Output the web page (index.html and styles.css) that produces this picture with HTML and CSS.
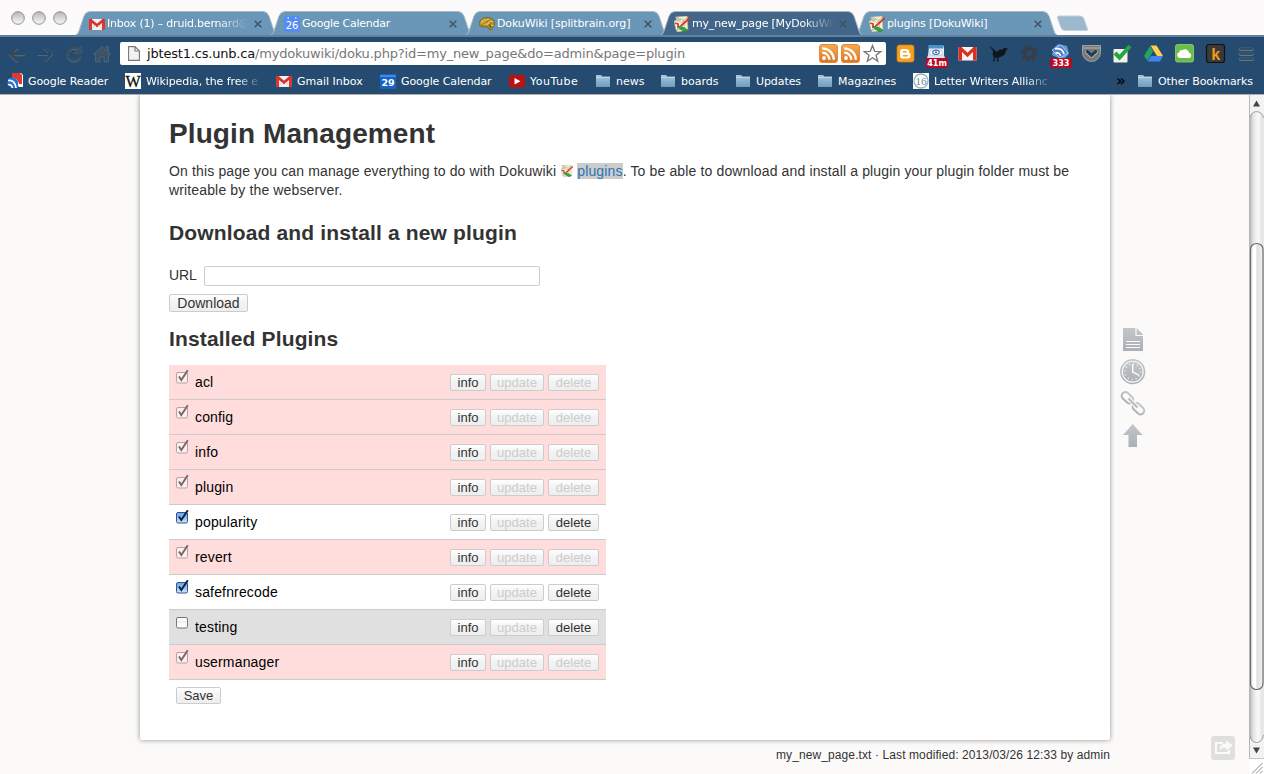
FILE: index.html
```html
<!DOCTYPE html>
<html lang="en">
<head>
<meta charset="utf-8">
<title>my_new_page [MyDokuWiki]</title>
<link rel="stylesheet" href="styles.css">
</head>
<body>
<svg class="defs" width="0" height="0" aria-hidden="true">
  <defs>
    <linearGradient id="gFolder" x1="0" y1="0" x2="0" y2="1"><stop offset="0" stop-color="#a9c6dc"/><stop offset="1" stop-color="#6f9cc0"/></linearGradient>
    <linearGradient id="gRss" x1="0" y1="0" x2="0" y2="1"><stop offset="0" stop-color="#f4ac55"/><stop offset="1" stop-color="#df7420"/></linearGradient>
    <linearGradient id="gLight" x1="0" y1="0" x2="0" y2="1"><stop offset="0" stop-color="#b4b4b4"/><stop offset=".55" stop-color="#dcdcdc"/><stop offset="1" stop-color="#f8f8f8"/></linearGradient>
    <linearGradient id="gTool" x1="0" y1="0" x2="0" y2="1"><stop offset="0" stop-color="#c4c6c8"/><stop offset="1" stop-color="#a9b0b8"/></linearGradient>
    <linearGradient id="gBlue" x1="0" y1="0" x2="0" y2="1"><stop offset="0" stop-color="#6ea5ec"/><stop offset=".5" stop-color="#8fbdf3"/><stop offset="1" stop-color="#cdf0ff"/></linearGradient>
  </defs>
  <symbol id="tab" viewBox="0 0 201 24"><path d="M0 24Q2 23.500 3 20L8 5Q10 .5 14 .5H187Q191 .5 193 5L198 20Q199 23.500 201 24Z" fill="currentColor"/><path d="M0 24Q2 23.500 3 20L8 5Q10 .5 14 .5H187Q191 .5 193 5L198 20Q199 23.500 201 24" fill="none" stroke="#a9b9c6" stroke-width="1"/></symbol>
  <symbol id="gmail" viewBox="0 0 16 16"><path d="M0 3h16v11H0z" fill="#f5eeee"/><path d="M0 3h3v11H0zM13 3h3v11h-3z" fill="#d93a32"/><path d="M1 3.500 8 9.500 15 3.500" fill="none" stroke="#d8302a" stroke-width="2.800"/><path d="M3 13 6.500 9M13 13 9.500 9" stroke="#d9c9c8" stroke-width=".8"/></symbol>
  <symbol id="doku" viewBox="0 0 16 16"><path d="M2 1 13 0 14 14 3 16z" fill="#f3efd9" stroke="#b7b59b" stroke-width=".6"/><path d="M0 5 9 3 11 13 2 14z" fill="#faf8ed" stroke="#a8aa91" stroke-width=".6"/><path d="M2 3h5M3 5h4M3 13h4M1 1h4" stroke="#94a680" stroke-width=".8"/><path d="M15.500 1 7 8.500 5 11 8.300 10 16 3z" fill="#d33a24"/><path d="M14 1 7 7" stroke="#f29b69" stroke-width="1"/><path d="M1 7 4 8 4 12" fill="none" stroke="#d94427" stroke-width="1.800"/><path d="M4 10 9 11 14 14 11 16 6 13z" fill="#32a637" stroke="#207226" stroke-width=".5"/></symbol>
  <symbol id="brain" viewBox="0 0 16 16"><path d="M0 9C0 4 4 1 9 1.500c5 .3 7 3.500 6.500 7L14 11l-2 3-2-.5L8.500 11 2 10.500z" fill="#b08c20" stroke="#65500e" stroke-width=".6"/><path d="M2 8c1-3 3-1 4-3s3-1 4-2M5 9c2-2 3 0 5-2M2 6l4-3M8 9l3-4 3 1M11 12l1.500-3 2 .500" fill="none" stroke="#ecd276" stroke-width="1"/><path d="m10 9 2 1-1 2" fill="none" stroke="#4e3c0c"/></symbol>
  <symbol id="folder" viewBox="0 0 16 16"><path d="M1 2h5l1.500 1.500H15V14H1z" fill="url(#gFolder)"/><path d="M1 4.500h14" stroke="#c6dae8" stroke-width=".8"/></symbol>
  <symbol id="rss" viewBox="0 0 19 19"><rect x=".5" y=".5" width="18" height="18" rx="2.500" fill="url(#gRss)" stroke="#e58a3b"/><circle cx="5" cy="14" r="1.900" fill="#fff"/><path d="M3.300 8.700a7 7 0 0 1 7 7M3.300 4.300A11.500 11.500 0 0 1 14.800 15.800" fill="none" stroke="#fff" stroke-width="2.300"/></symbol>
  <symbol id="chk-off" viewBox="0 0 14 15"><rect x="1.500" y="3.500" width="11" height="10.500" rx="1.500" fill="#fff5f5" fill-opacity=".65" stroke="#b5a3a3"/><path d="M4 7.500 6.300 11 12.800 1.300" fill="none" stroke="#75666a" stroke-width="1.900"/></symbol>
  <symbol id="chk-on" viewBox="0 0 14 15"><rect x="1.500" y="3.500" width="11" height="10.500" rx="1.500" fill="url(#gBlue)" stroke="#32558d"/><path d="M4 7.500 6.300 11 12.800 1.300" fill="none" stroke="#12203a" stroke-width="2"/></symbol>
  <symbol id="chk-none" viewBox="0 0 14 15"><rect x="1.500" y="3.500" width="11" height="10.500" rx="1.500" fill="#fbfbfb" stroke="#777"/><path d="M2.500 8h9" stroke="#eee" stroke-width="2"/></symbol>
</svg>

<header class="browser">
  <div class="tabstrip">
    <div class="lights">
      <svg width="14" height="14" viewBox="0 0 14 14"><circle cx="7" cy="7" r="6.300" fill="url(#gLight)" stroke="#8f8f8f" stroke-width="1"/></svg>
      <svg width="14" height="14" viewBox="0 0 14 14"><circle cx="7" cy="7" r="6.300" fill="url(#gLight)" stroke="#8f8f8f" stroke-width="1"/></svg>
      <svg width="14" height="14" viewBox="0 0 14 14"><circle cx="7" cy="7" r="6.300" fill="url(#gLight)" stroke="#8f8f8f" stroke-width="1"/></svg>
    </div>
    <div class="tab"><svg class="tab-shape"><use href="#tab"/></svg><svg class="fav"><use href="#gmail"/></svg><span class="tab-title fade t1">Inbox (1) – druid.bernard@</span><svg class="close" viewBox="0 0 8 8"><path d="m.7.7 6.600 6.600m0-6.600L.7 7.300"/></svg></div>
    <div class="tab"><svg class="tab-shape"><use href="#tab"/></svg><svg class="fav" viewBox="0 0 16 16"><rect width="16" height="16" rx="1" fill="#548cf3"/><path d="M3.500 2h1.500M11 2h1.500" stroke="#dce8ff" stroke-width="1.500"/><text x="8" y="13" text-anchor="middle" class="cal-num">26</text></svg><span class="tab-title t2">Google Calendar</span><svg class="close" viewBox="0 0 8 8"><path d="m.7.7 6.600 6.600m0-6.600L.7 7.300"/></svg></div>
    <div class="tab"><svg class="tab-shape"><use href="#tab"/></svg><svg class="fav"><use href="#brain"/></svg><span class="tab-title t3">DokuWiki [splitbrain.org]</span><svg class="close" viewBox="0 0 8 8"><path d="m.7.7 6.600 6.600m0-6.600L.7 7.300"/></svg></div>
    <div class="tab active"><svg class="tab-shape"><use href="#tab"/></svg><svg class="fav"><use href="#doku"/></svg><span class="tab-title fade t4">my_new_page [MyDokuWik</span><svg class="close" viewBox="0 0 8 8"><path d="m.7.7 6.600 6.600m0-6.600L.7 7.300"/></svg></div>
    <div class="tab"><svg class="tab-shape"><use href="#tab"/></svg><svg class="fav"><use href="#doku"/></svg><span class="tab-title t5">plugins [DokuWiki]</span><svg class="close" viewBox="0 0 8 8"><path d="m.7.7 6.600 6.600m0-6.600L.7 7.300"/></svg></div>
    <svg class="newtab" width="33" height="17" viewBox="0 0 33 17"><path d="M3 1h21q3 0 4 3l3.500 10q.5 1.500-1.500 1.500H9q-3 0-4-3L1.500 3Q1 1 3 1z" fill="#9bb8cd" stroke="#c3d1dc"/></svg>
  </div>

  <div class="toolbar">
    <nav class="nav">
      <svg width="20" height="20" viewBox="0 0 20 20"><path d="M18 10.700H4M10.500 3.700 3.500 10.700l7 7" fill="none" stroke="#56718a" stroke-width="3"/><path d="M18 10H4M10.500 3 3.500 10l7 7" fill="none" stroke="#34485b" stroke-width="2.600"/></svg>
      <svg width="20" height="20" viewBox="0 0 20 20"><path d="M2 10.500h14M9.500 4 16.300 10.500l-6.800 6.500" fill="none" stroke="#456887" stroke-width="3.200"/><path d="M2 10h14M9.500 3.500 16 10l-6.500 6.500" fill="none" stroke="#2b4762" stroke-width="2.200"/></svg>
      <svg width="20" height="20" viewBox="0 0 20 20"><path d="M15.300 7.300A6.300 6.300 0 1 0 16 12.800" fill="none" stroke="#56718a" stroke-width="2.800"/><path d="M15.300 6.500A6.300 6.300 0 1 0 16 12" fill="none" stroke="#3a4e61" stroke-width="2.800"/><path d="M17.500 2v7.500H10z" fill="#3a4e61" stroke="#56718a" stroke-width=".4"/></svg>
      <svg width="20" height="20" viewBox="0 0 20 20"><path d="M3.500 10.500V18H8v-5h4v5h4.500v-7.500H18.500L10 2.500 1.500 10.500zM14 2.500h2.500v5z" fill="#3f5265" stroke="#58738a" stroke-width=".6"/></svg>
    </nav>
    <div class="omnibox">
      <svg class="doc" width="12" height="15" viewBox="0 0 12 15"><path d="M.6.600H7L11.400 5v9.400H.6zM7 .6V5h4.400" fill="#f2f2f2" stroke="#777" stroke-width="1.100"/></svg>
      <span class="url"><b>jbtest1.cs.unb.ca</b>/mydokuwiki/doku.php?id=my_new_page&amp;do=admin&amp;page=plugin</span>
      <svg width="19" height="19"><use href="#rss"/></svg>
      <svg width="19" height="19"><use href="#rss"/></svg>
      <svg width="19" height="19" viewBox="0 0 19 19"><path d="m9.500 1.500 2.200 5.800 6.100.2-4.800 3.800 1.700 5.900-5.200-3.400-5.200 3.400 1.700-5.900L1.200 7.500l6.100-.2z" fill="#fff" stroke="#777" stroke-width="1.300"/></svg>
    </div>
    <div class="exts">
      <svg viewBox="0 0 31 28"><rect x="7" y="5" width="17" height="17" rx="2.500" fill="#f5a01e" stroke="#d8830a" stroke-width=".7"/><path d="M12.500 9h4q2.500 0 2.500 2.500v1.300h.5q1 0 1 1V15.500q0 3-3 3h-5q-2.500 0-2.500-3V12q0-3 2.500-3z" fill="#fff"/><path d="M13.500 11.700h2.500M13.500 15.700h4" stroke="#f5a01e" stroke-width="1.500" stroke-linecap="round"/></svg>
      <div class="ext"><svg viewBox="0 0 31 28"><path d="M8 6h15v11H7z" fill="#eef3f8"/><path d="M7.500 5h15v3.500h-15z" fill="#4b91ce"/><path d="M6 18 8.500 11h13l2.500 7z" fill="#d9e4ed"/><path d="M9.500 10h11l1 5h-13z" fill="#fff" stroke="#a9c3da" stroke-width=".7"/><ellipse cx="15" cy="12.300" rx="3.300" ry="2.200" fill="#fff" stroke="#3b82c8" stroke-width="1.200"/><circle cx="15" cy="12.300" r="1.100" fill="#d43c32"/></svg><span class="count">41m</span></div>
      <svg viewBox="0 0 31 28"><path d="M6.500 7h18v13.500h-18z" fill="#f7f3f2"/><path d="M6.500 7H10v13.500H6.500zM21 7h3.500v13.500H21z" fill="#d9301f"/><path d="M8 7.800 15.500 15 23 7.800" fill="none" stroke="#d9301f" stroke-width="3.200"/></svg>
      <svg viewBox="0 0 31 28"><path d="M6 5.500 14 12Q17 8 19 10L20 9q1.500-2 3.500-.5l2 .2-2.200 1.300q-.8 5-4.800 6.500L15 18l1 4-2-1 0-3.500L12 18l-.5 3-1.500 1 .7-5Q9 14 10 11z" fill="#11161d"/></svg>
      <svg viewBox="0 0 31 28"><circle cx="15.500" cy="13.500" r="7" fill="none" stroke="#363f48" stroke-width="3" stroke-dasharray="3 2.500"/><circle cx="15.500" cy="13.500" r="4.700" fill="none" stroke="#363f48" stroke-width="3.500"/></svg>
      <div class="ext"><svg viewBox="0 0 31 28"><path d="M13 4 22 6 24 14 18 20 7 15 9 8z" fill="#6798d9"/><path d="M7 10 16 5 23 13 15 18z" fill="#4a7fca" stroke="#c5d9ee" stroke-width=".8"/><path d="M10 9q7-2 9 5M10.500 13q4-1 5 3" fill="none" stroke="#fff" stroke-width="1.800"/></svg><span class="count">333</span></div>
      <svg viewBox="0 0 31 28"><path d="M6.500 5.500h18v7a9 9 0 0 1-18 0z" fill="#777979" stroke="#a0a2a2" stroke-width="1"/><path d="M7 8h17" stroke="#c3c5c5" stroke-width=".8"/><path d="M11.300 12 15.500 15.800 19.700 12" fill="none" stroke="#c8cccf" stroke-width="4.200" stroke-linecap="round" stroke-linejoin="round"/><path d="M11.300 11.500 15.500 15.300 19.700 11.500" fill="none" stroke="#223d57" stroke-width="3.200" stroke-linecap="round"/></svg>
      <svg viewBox="0 0 31 28"><rect x="6.500" y="9" width="14" height="13.500" rx="1" fill="#f4f2e4"/><path d="M8 13 12.500 17.500 23 6" fill="none" stroke="#22a640" stroke-width="4"/></svg>
      <svg viewBox="0 0 31 28"><path d="M12.500 5.500h6L25 16h-6z" fill="#fcd04b"/><path d="M12 6 15.200 11 9.500 21 6 16z" fill="#24a261"/><path d="m13 16h12l-3 5.500H9.800z" fill="#4484f0"/></svg>
      <svg viewBox="0 0 31 28"><rect x="6.500" y="4.500" width="18" height="17.500" rx="2" fill="#6dbb4b" stroke="#91d474" stroke-width=".8"/><path d="M10.500 18a3 3 0 0 1-.3-5.800 2.500 2.500 0 0 1 3.200-2 4 4 0 0 1 6.600 2.600A2.700 2.700 0 0 1 20.500 18z" fill="#fff"/></svg>
      <svg viewBox="0 0 31 28"><rect x="6.500" y="4.500" width="18" height="18" rx="2.500" fill="#39393a" stroke="#111" stroke-width="1.200"/><text x="15.800" y="20" text-anchor="middle" class="k">k</text></svg>
      <svg viewBox="0 0 31 28"><path d="M9.500 9.200h11.500M9.500 14.200h11.500M9.500 19.200h11.500" stroke="#5d7a93" stroke-width="3.600" stroke-linecap="round"/><path d="M9.500 8.800h11.500M9.500 13.800h11.500M9.500 18.800h11.500" stroke="#374d61" stroke-width="2.400" stroke-linecap="round"/></svg>
    </div>
  </div>

  <div class="bookmarks">
    <div class="bm"><svg class="fav" viewBox="0 0 16 16"><path d="M5 0h9l2 2v12h-4L6 6z" fill="#fff"/><path d="M5 0h8l2 2v9h-3q-1-6-7-6z" fill="#d93b31"/><path d="M2 5h6l3 3v7H4L0 11z" fill="#2875d7"/><path d="M1 7.500q7-1 8 7.500M1 11.500q4 0 4.500 3.500" fill="none" stroke="#fff" stroke-width="1.700"/></svg><span class="b1">Google Reader</span></div>
    <div class="bm"><svg class="fav" viewBox="0 0 16 16"><path d="M0 0h16v16H0z" fill="#fff"/><text x="8" y="13.500" text-anchor="middle" class="w">W</text></svg><span class="fade b2">Wikipedia, the free e</span></div>
    <div class="bm"><svg class="fav"><use href="#gmail"/></svg><span class="b3">Gmail Inbox</span></div>
    <div class="bm"><svg class="fav" viewBox="0 0 16 16"><rect y="1" width="16" height="15" rx="1" fill="#1763c6"/><path d="M0 3h16" stroke="#3d8be5" stroke-width="2"/><text x="8" y="13.300" text-anchor="middle" class="cal-num bold">29</text></svg><span class="b4">Google Calendar</span></div>
    <div class="bm"><svg class="fav" viewBox="0 0 16 16"><rect y="2" width="16" height="12.500" rx="2.500" fill="#bc1111"/><path d="m5.500 5 6 3.200-6 3.200z" fill="#fff"/></svg><span class="b5">YouTube</span></div>
    <div class="bm"><svg class="fav"><use href="#folder"/></svg><span>news</span></div>
    <div class="bm"><svg class="fav"><use href="#folder"/></svg><span>boards</span></div>
    <div class="bm"><svg class="fav"><use href="#folder"/></svg><span class="b8">Updates</span></div>
    <div class="bm"><svg class="fav"><use href="#folder"/></svg><span>Magazines</span></div>
    <div class="bm"><svg class="fav" viewBox="0 0 16 16"><path d="M0 0h16v16H0z" fill="#fff"/><circle cx="8" cy="8" r="7" fill="none" stroke="#94b4b6" stroke-width="1.300"/><text x="8" y="12.300" text-anchor="middle" class="sixteen">16</text></svg><span class="fade b10">Letter Writers Allianc</span></div>
    <span class="more">»</span>
    <div class="bm"><svg class="fav"><use href="#folder"/></svg><span class="b11">Other Bookmarks</span></div>
  </div>
</header>

<div class="viewport">
  <div class="site">
    <main class="page">
      <h1>Plugin Management</h1>
      <p>On this page you can manage everything to do with Dokuwiki <svg class="iw"><use href="#doku"/></svg><a href="#">plugins</a>. To be able to download and install a plugin your plugin folder must be<br>writeable by the webserver.</p>
      <h2 class="h-dl">Download and install a new plugin</h2>
      <div class="field"><label for="url">URL</label><input id="url" type="text"></div>
      <button class="btn big">Download</button>
      <h2 class="h-inst">Installed Plugins</h2>
      <div class="plugins">
        <div class="row locked"><svg><use href="#chk-off"/></svg><span>acl</span><button class="btn info">info</button><button class="btn update" disabled>update</button><button class="btn delete" disabled>delete</button></div>
        <div class="row locked"><svg><use href="#chk-off"/></svg><span>config</span><button class="btn info">info</button><button class="btn update" disabled>update</button><button class="btn delete" disabled>delete</button></div>
        <div class="row locked"><svg><use href="#chk-off"/></svg><span>info</span><button class="btn info">info</button><button class="btn update" disabled>update</button><button class="btn delete" disabled>delete</button></div>
        <div class="row locked"><svg><use href="#chk-off"/></svg><span>plugin</span><button class="btn info">info</button><button class="btn update" disabled>update</button><button class="btn delete" disabled>delete</button></div>
        <div class="row"><svg><use href="#chk-on"/></svg><span>popularity</span><button class="btn info">info</button><button class="btn update" disabled>update</button><button class="btn delete">delete</button></div>
        <div class="row locked"><svg><use href="#chk-off"/></svg><span>revert</span><button class="btn info">info</button><button class="btn update" disabled>update</button><button class="btn delete" disabled>delete</button></div>
        <div class="row"><svg><use href="#chk-on"/></svg><span>safefnrecode</span><button class="btn info">info</button><button class="btn update" disabled>update</button><button class="btn delete">delete</button></div>
        <div class="row disabled"><svg><use href="#chk-none"/></svg><span>testing</span><button class="btn info">info</button><button class="btn update" disabled>update</button><button class="btn delete">delete</button></div>
        <div class="row locked"><svg><use href="#chk-off"/></svg><span>usermanager</span><button class="btn info">info</button><button class="btn update" disabled>update</button><button class="btn delete" disabled>delete</button></div>
      </div>
      <button class="btn save">Save</button>
    </main>
    <div class="docinfo">my_new_page.txt · Last modified: 2013/03/26 12:33 by admin</div>
  </div>
  <aside class="side">
    <div class="tools">
      <svg width="26" height="26" viewBox="0 0 26 26"><path d="M3 1h13.500L23 7.500V24H3z" fill="url(#gTool)"/><path d="M16 1v7.500h7" fill="none" stroke="#fbfaf9" stroke-width="1.200"/><path d="M6 14.500h14M6 17.500h14M6 20.500h14" stroke="#fbfaf9" stroke-width="1.200"/></svg>
      <svg width="26" height="26" viewBox="0 0 26 26"><circle cx="12.700" cy="12.700" r="11.800" fill="none" stroke="url(#gTool)" stroke-width="1.600"/><circle cx="12.700" cy="12.700" r="9.900" fill="url(#gTool)"/><circle cx="12.700" cy="12.700" r="7.800" fill="none" stroke="#fbfaf9" stroke-width="1.500" stroke-dasharray="1 3.084"/><path d="M12.700 5v8l6.500 3.300" fill="none" stroke="#fbfaf9" stroke-width="1.500"/></svg>
      <svg width="26" height="26" viewBox="0 0 26 26"><g fill="none" stroke="url(#gTool)" stroke-width="2"><rect x="1" y="3" width="13" height="7.500" rx="3.700" transform="rotate(43 7.500 6.700)"/><rect x="12" y="14" width="13" height="7.500" rx="3.700" transform="rotate(43 18.500 17.700)"/><path d="m8.500 7.500 9 9" stroke="#fbfaf9" stroke-width="4"/><path d="m8.500 7.500 9 9" stroke="#b7bbc0" stroke-width="2.200"/></g></svg>
      <svg width="26" height="26" viewBox="0 0 26 26"><path d="m12.700 1 9.800 11H17v12H8.500V12H3z" fill="url(#gTool)"/></svg>
    </div>
    <svg class="share" width="24" height="24" viewBox="0 0 24 24"><rect width="24" height="24" rx="3" fill="#dfdfdd"/><path d="M12 7H5v10h13v-3" fill="none" stroke="#fbfaf9" stroke-width="2.200"/><path d="M8.500 14Q8.500 7.500 15 7.500V4.500l7 5-7 5V11.500Q11 11.500 8.500 14z" fill="#fbfaf9"/></svg>
  </aside>
  <div class="scroll">
    <svg width="15" height="664" viewBox="0 0 15 664">
      <defs>
        <linearGradient id="gTrack"><stop offset="0" stop-color="#b9b9b9"/><stop offset=".25" stop-color="#e4e4e4"/><stop offset=".6" stop-color="#fafafa"/><stop offset="1" stop-color="#dedede"/></linearGradient>
        <linearGradient id="gThumb"><stop offset="0" stop-color="#c9c9c9"/><stop offset=".2" stop-color="#fff"/><stop offset=".45" stop-color="#fff"/><stop offset=".5" stop-color="#dedede"/><stop offset="1" stop-color="#f3f3f3"/></linearGradient>
      </defs>
      <path d="M0 0h15v664H0z" fill="#f3f3f3"/>
      <path d="M1 24C1 14 14 14 14.500 24V640C14 651 1 651 1 640z" fill="url(#gTrack)"/>
      <path d="M1 23C2 14.500 13 14.500 14.500 23M1 640C2 650 13 650 14.500 640" fill="none" stroke="#9a9a9a"/>
      <rect x="1.500" y="148.500" width="12.500" height="446" rx="6" fill="url(#gThumb)" stroke="#6c6c6c" stroke-width="1.200"/>
      <path d="M.5 0v664" stroke="#b5b5b5"/><path d="M0 663.500h15" stroke="#c6c6c6"/>
      <path d="m7.500 5.500 3.500 6H4zM7.500 658.500l3.500-6H4z" fill="#444"/>
    </svg>
    <svg width="15" height="15" viewBox="0 0 15 15"><path d="M0 0h15v15H0z" fill="#fff"/><path d="M3 14.500 13.500 4M7 14.500l6.500-6.500M11 14.500l2.500-2.500" stroke="#8b8b8b"/></svg>
  </div>
</div>
</body>
</html>
```
FILE: styles.css
```css
* { box-sizing: border-box; }
body { margin: 0; width: 1264px; height: 774px; overflow: hidden; display: flex; flex-direction: column; background: #fbfaf9; font-family: "Liberation Sans", Arial, sans-serif; }
svg { display: block; flex: none; }
.defs { position: absolute; }
.fav { width: 16px; height: 16px; }

/* browser chrome */
.browser { height: 95px; flex: none; background: #254c70; border-bottom: 1px solid #b0aeac; font-family: "DejaVu Sans", sans-serif; font-size: 11px; color: #fff; }
.tabstrip { height: 37px; display: flex; background: #fcfafb; border-bottom: 2px solid #63819b; padding-top: 11px; }
.lights { display: flex; gap: 7px; width: 76px; padding-left: 11px; flex: none; }
.tab { position: relative; width: 201px; height: 24px; margin-right: -6px; flex: none; display: flex; align-items: center; padding: 1px 0 0 13px; color: #6a96b8; }
.tab.active { z-index: 1; color: #416689; }
.tab-shape { position: absolute; left: 0; top: 0; width: 201px; height: 24px; }
.tab .fav { position: relative; margin-right: 2px; }
.tab-title { position: relative; width: 147px; white-space: nowrap; color: #fff; }
.close { position: relative; width: 8px; height: 8px; fill: none; stroke: #3f5567; stroke-width: 1.500px; }
.newtab { margin: 4px 0 0 5px; }
.fade { -webkit-mask-image: linear-gradient(90deg, #000 78%, transparent 100%); mask-image: linear-gradient(90deg, #000 78%, transparent 100%); }
.t1 { width: 142px; margin-right: 5px; letter-spacing: -.2px; }
.t4 { width: 142px; margin-right: 5px; letter-spacing: -.2px; }
.t2 { letter-spacing: -.25px; }
.t3 { letter-spacing: -.12px; }
.t5 { letter-spacing: -.15px; }

.toolbar { height: 32px; display: flex; align-items: center; padding-top: 1px; }
.nav { display: flex; gap: 8.300px; width: 120px; padding-left: 7px; flex: none; }
.omnibox { width: 766px; height: 23px; flex: none; background: #fff; border-radius: 2px; display: flex; align-items: center; gap: 3px; padding: 0 4px 0 8px; }
.doc { margin-right: 4px; }
.url { flex: 1; font-size: 13px; letter-spacing: -.19px; color: #777; white-space: nowrap; }
.url b { font-weight: normal; color: #111; }
.exts { display: flex; margin-left: 4px; }
.exts > svg, .ext, .ext svg { width: 31px; height: 28px; flex: none; }
.ext { position: relative; }
.count { position: absolute; left: 5px; bottom: 0; width: 22px; height: 10px; border-radius: 2px; background: #b60a24; font: bold 9px/10px "DejaVu Sans Condensed", "DejaVu Sans", sans-serif; text-align: center; }
.cal-num { font: 10px "DejaVu Sans", sans-serif; fill: #fff; }
.cal-num.bold { font: bold 9.500px "DejaVu Sans", sans-serif; }
.k { font: bold 16px "Liberation Sans", sans-serif; fill: #f39a13; }
.w { font: 16px "Liberation Serif", serif; fill: #111; stroke: #111; stroke-width: .3px; }
.sixteen { font: 11px "Liberation Serif", serif; fill: #648d90; }

.bookmarks { height: 25px; display: grid; grid-template-columns: 118px 151px 104px 129px 86px 65px 75px 82px 96px 204px 20px 1fr; align-items: center; padding-left: 7px; padding-bottom: 1px; white-space: nowrap; }
.bm { display: flex; align-items: center; gap: 5px; }
.b1, .b4, .b8, .b11 { letter-spacing: -.08px; }
.b2 { width: 116px; letter-spacing: -.1px; }
.b5 { letter-spacing: .5px; }
.b10 { width: 118px; letter-spacing: -.07px; }
.more { color: #05080c; font-size: 15px; font-weight: bold; line-height: 16px; margin-left: -1px; }

/* wiki page */
.viewport { height: 679px; display: flex; }
.site { width: 1110px; flex: none; padding-left: 140px; }
.page { width: 970px; height: 645px; padding: 22px 29px 0; background: #fff; border-radius: 0 0 2px 2px; box-shadow: 0 0 5px #8f8f8f; clip-path: inset(0 -8px -8px -8px); color: #333; font-size: 14px; }
h1 { margin: 0; font-size: 28px; line-height: 34px; letter-spacing: .1px; white-space: nowrap; }
p { margin: 11px 0 0; line-height: 19px; letter-spacing: .142px; white-space: nowrap; }
.iw { display: inline-block; width: 12px; height: 12px; margin: 0 4px 0 1px; vertical-align: -1px; }
a { color: #2b73b7; text-decoration: none; background: #ccc; padding: 0; }
h2 { margin: 20px 0 0; font-size: 21px; line-height: 26px; letter-spacing: .15px; }
.field { display: flex; align-items: center; margin-top: 20px; }
.field label { width: 35px; padding-bottom: 2px; letter-spacing: -.15px; }
.field input { width: 336px; height: 20px; border: 1px solid #ccc; border-radius: 2px; background: #fff; padding: 0; }
.btn { display: block; height: 17px; padding: 1px 0 0; border: 1px solid #ccc; border-radius: 2px; background: linear-gradient(#fff, #f4f4f4 40%, #eee); color: #333; font: 13px/14px "Liberation Sans", Arial, sans-serif; }
.btn:disabled { color: #ccc; }
.big { width: 79px; height: 18px; margin-top: 8px; padding: 0; font-size: 14px; line-height: 16px; }
.h-inst { margin-top: 14px; }
.plugins { width: 437px; margin-top: 13px; }
.row { height: 35px; display: flex; align-items: center; border-bottom: 1px solid #ccc; padding: 0 7px 0 6px; color: #000; }
.row.locked { background: #fdd; }
.row.disabled { background: #e0e0e0; }
.row svg { width: 14px; height: 15px; align-self: flex-start; margin: 4px 6px 0 0; }
.row span { flex: 1; letter-spacing: .16px; }
.info { width: 36px; }
.update { width: 54px; margin: 0 4px; }
.delete { width: 51px; }
.save { width: 45px; margin: 7px 0 0 7px; padding: 0; }
.docinfo { margin-top: 7px; text-align: right; font-size: 12px; line-height: 16px; letter-spacing: .1px; color: #333; white-space: nowrap; }
.side { width: 139px; flex: none; display: flex; flex-direction: column; justify-content: space-between; padding: 232px 0 14px 10px; }
.tools { display: flex; flex-direction: column; gap: 6px; }
.share { margin-left: 91px; }
.scroll { width: 15px; }
```
